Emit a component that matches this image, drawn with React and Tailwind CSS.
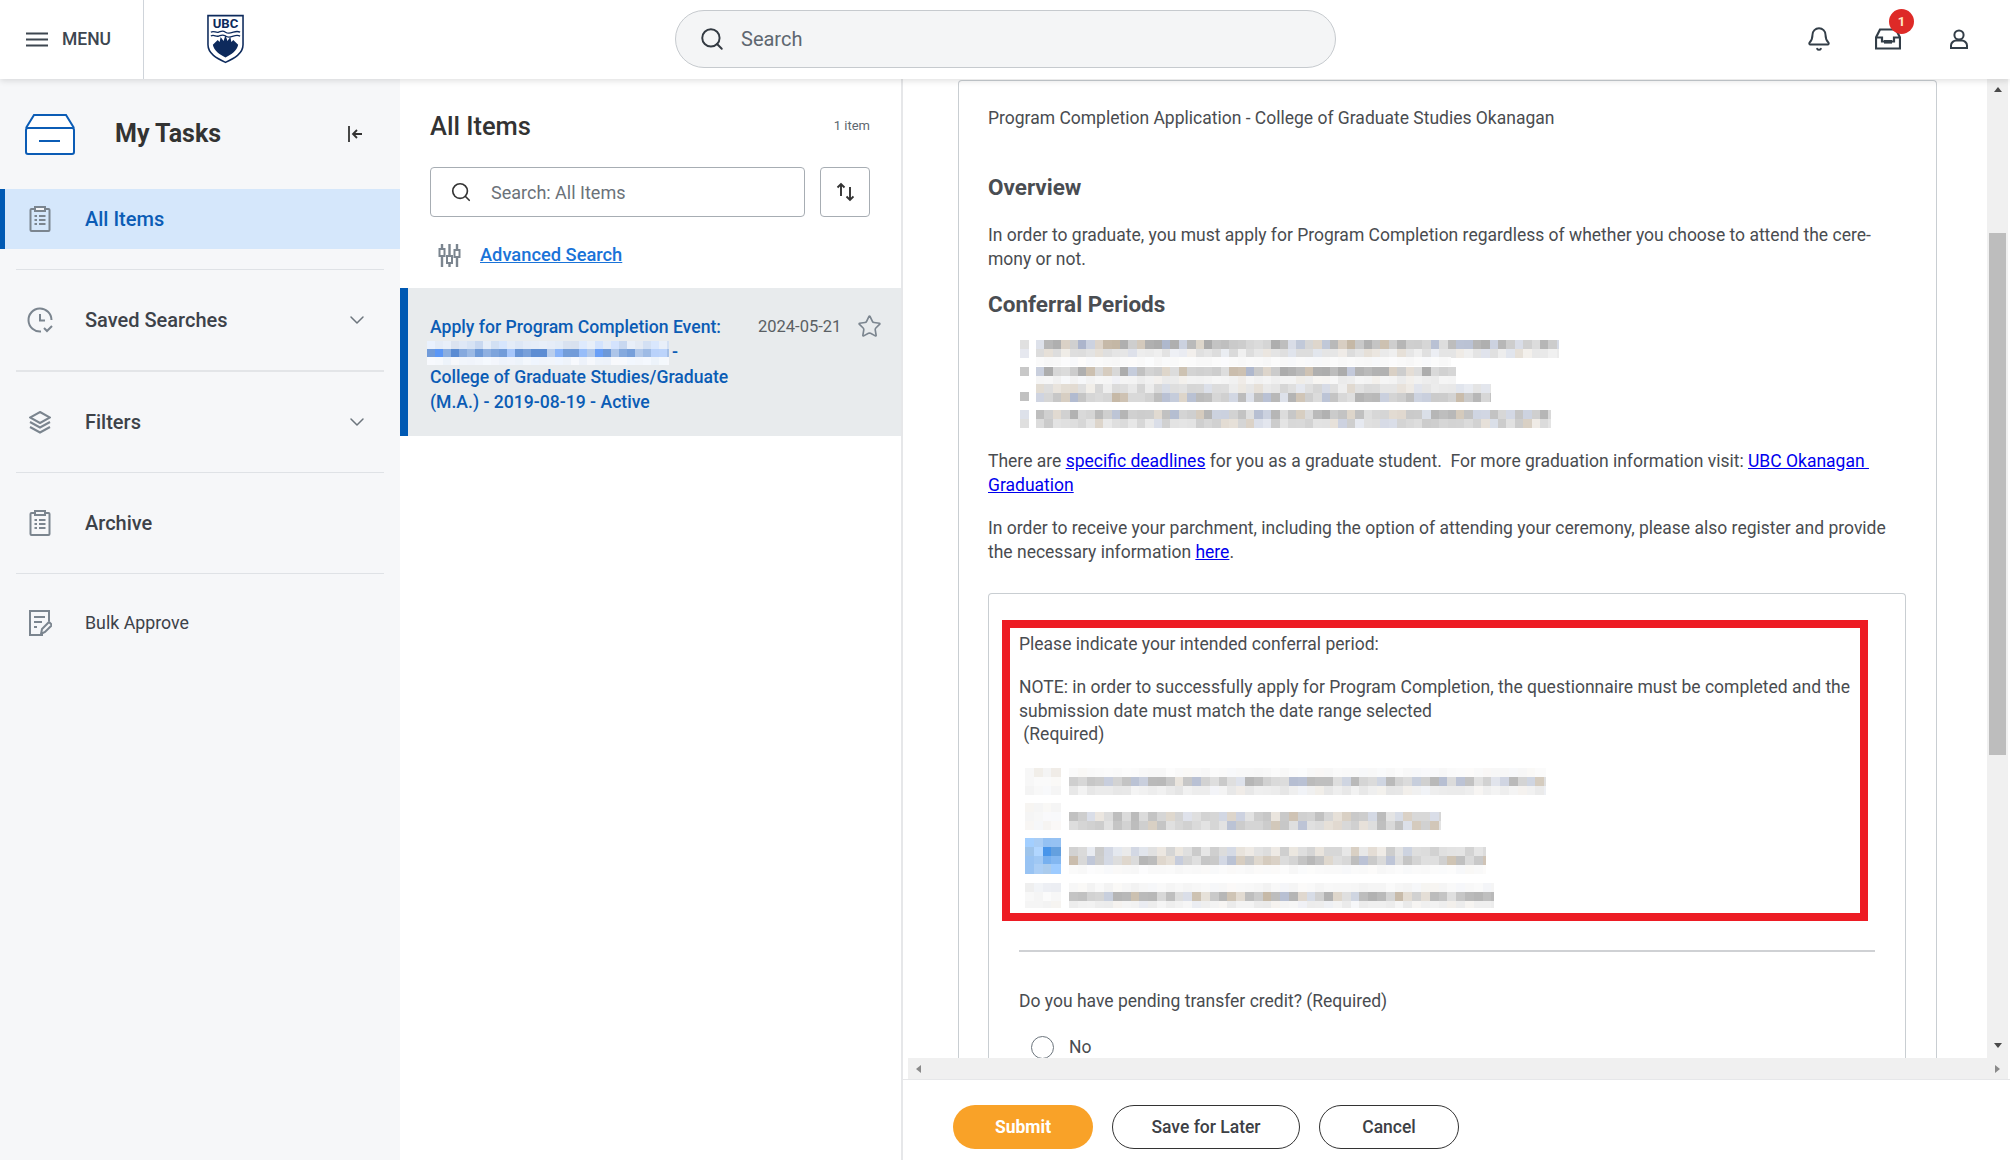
import React from "react";
import { Search, Bell, ChevronDown, Star } from "lucide-react";

function rng(seed) {
  let s = seed;
  return () => {
    s = (s * 16807) % 2147483647;
    return (s - 1) / 2147483646;
  };
}

function Mosaic({ w, h, cw, ch, seed, bands, className }) {
  const r = rng(seed);
  const rects = [];
  bands.forEach((b, bi) => {
    for (let row = 0; row < b.rows.length; row++) {
      const strength = b.rows[row];
      for (let x = b.x0; x < b.x1; x += cw) {
        const v = r();
        const amount = strength * (0.4 + v * 0.6);
        const tint = r();
        const base = b.color || [150, 150, 150];
        const t = tint < 0.16 ? [0, 12, 40] : tint < 0.3 ? [28, 10, -14] : [0, 0, 0];
        const c = base.map((n, i) => Math.min(255, Math.round(255 - (255 - (n + t[i])) * amount)));
        rects.push(
          <rect key={bi + "-" + row + "-" + x} x={x} y={b.y + row * ch} width={Math.min(cw, b.x1 - x) + 0.5} height={ch + 0.5} fill={`rgb(${c[0]},${c[1]},${c[2]})`} />
        );
      }
    }
  });
  return (
    <svg width={w} height={h} viewBox={`0 0 ${w} ${h}`} shapeRendering="crispEdges" className={className}>
      {rects}
    </svg>
  );
}

const Clipboard = () => (
  <svg width="22" height="26" viewBox="0 0 22 26" fill="none" stroke="#7b858f" strokeWidth="2">
    <rect x="1.500" y="3" width="19" height="22" rx="1" />
    <rect x="6" y="1" width="10" height="4" fill="#f6f7f9" />
    <path d="M5.500 10h2.500M10 10h6.500M5.500 14h2.500M10 14h6.500M5.500 18h2.500M10 18h6.500" strokeWidth="2" />
  </svg>
);

const Logo = () => (
  <svg width="37" height="50" viewBox="0 0 38 50">
    <path d="M1 1h36v30c0 9-9 14-18 18C10 45 1 40 1 31z" fill="#fff" stroke="#0d2a5c" strokeWidth="1.600" />
    <text x="19" y="14" textAnchor="middle" fontFamily="Roboto, sans-serif" fontWeight="700" fontSize="13.500" fill="#0d2a5c">UBC</text>
    <path d="M4 18c3-2 5 1 8 0s4-2 7 0 5 1 8 0 5-1 7 0M4 22c3-2 5 1 8 0s4-2 7 0 5 1 8 0 5-1 7 0" fill="none" stroke="#0d2a5c" strokeWidth="1.300" />
    <path d="M6 31l5-5 2 2 1-5 3 4 2-6 2 6 3-4 1 5 2-2 5 5c-1 6-7 10-13 13-6-3-12-7-13-13z" fill="#0d2a5c" />
  </svg>
);

function NavRow({ icon, label, chevron, active, size = "text-[20px]", weight = "font-medium" }) {
  return (
    <div className={`flex items-center h-[60px] ${active ? "bg-[#d5e7fb] border-l-[5px] border-[#0059b3] pl-[24px]" : "pl-[29px]"}`}>
      <span className="w-[56px] flex">{icon}</span>
      <span className={`${size} ${weight} ${active ? "text-[#0b5cb5]" : "text-[#3d4249]"}`}>{label}</span>
      {chevron && <ChevronDown className="ml-auto mr-[31px] text-[#6c757d]" size={24} strokeWidth={1.5} />}
    </div>
  );
}

const Divider = () => <div className="h-px bg-[#dfe2e6] mx-[16px] my-[20px]" />;

const linkCls = "text-[#0000ee] underline";

export default function App() {
  return (
    <div className="w-[2010px] h-[1160px] overflow-hidden flex flex-col bg-white text-[#494c50] font-['Roboto',sans-serif]">
      <header className="h-[79px] shrink-0 flex items-center bg-white shadow-[0_2px_6px_rgba(0,0,0,0.12)] relative z-10">
        <div className="w-[144px] h-full flex items-center pl-[26px] border-r border-[#cfd4da]">
          <svg width="22" height="15" viewBox="0 0 22 15" stroke="#3d4650" strokeWidth="2.200"><path d="M0 1.500h22M0 7.500h22M0 13.500h22" /></svg>
          <span className="ml-[14px] text-[17.500px] font-medium text-[#3d4650]">MENU</span>
        </div>
        <div className="ml-[63px] flex -mt-[2px]"><Logo /></div>
        <div className="ml-[431px] -mt-[2px] w-[661px] h-[58px] rounded-full bg-[#f4f5f6] border border-[#c6cace] flex items-center pl-[23px]">
          <Search size={26} strokeWidth={1.800} className="text-[#333a42]" />
          <span className="ml-[16px] text-[20px] text-[#5e6770]">Search</span>
        </div>
        <div className="ml-[470px] flex items-center -mt-[1px]">
          <Bell size={26} strokeWidth={1.800} className="text-[#333e48]" />
          <div className="relative ml-[43px] flex">
            <svg width="26" height="22" viewBox="0 0 26 22" fill="none" stroke="#333e48" strokeWidth="2.200">
              <path d="M5 1.500h16l4 8V20.500H1V9.500z" />
              <path d="M1 9.500h6v4h12v-4h6M9 13h8" />
              <path d="M9 14.500h8" />
            </svg>
            <span className="absolute -top-[19px] left-[14px] w-[25px] h-[25px] rounded-full bg-[#de2a27] text-[#ffe9c8] text-[13px] font-bold flex items-center justify-center">1</span>
          </div>
          <svg className="ml-[49px]" width="18" height="20" viewBox="0 0 18 20" fill="none" stroke="#333e48" strokeWidth="2">
            <circle cx="9" cy="6" r="4.600" />
            <path d="M1 19v-2.500c0-3 3-5 5-5h6c2 0 5 2 5 5V19z" />
          </svg>
        </div>
      </header>

      <div className="flex-1 flex min-h-0">
        <aside className="w-[400px] shrink-0 bg-[#f6f7f9]">
          <div className="h-[110px] flex items-center pl-[25px] pr-[37px]">
            <svg width="50" height="41" viewBox="0 0 50 41" fill="none" stroke="#0b5cb5" strokeWidth="2">
              <path d="M1 14 9 1h32l8 13" fill="#fff" />
              <rect x="1" y="14" width="48" height="26" rx="2" fill="#fff" />
              <path d="M14 27h21" />
            </svg>
            <span className="ml-[40px] text-[25px] font-bold text-[#333]">My Tasks</span>
            <svg className="ml-auto" width="15" height="16" viewBox="0 0 15 16" fill="none" stroke="#333" strokeWidth="1.800"><path d="M1 0v16M14 8H5M9 4 5 8l4 4" /></svg>
          </div>
          <NavRow active icon={<Clipboard />} label="All Items" />
          <Divider />
          <NavRow icon={
            <svg className="-ml-[2px]" width="26" height="26" viewBox="0 0 26 26" fill="none" stroke="#7b858f" strokeWidth="2">
              <path d="M14 24.500A11.500 11.500 0 1 1 24.500 13" />
              <path d="M13 7v6.500h5" /><path d="m17 21 3 3 5-5" />
            </svg>
          } label="Saved Searches" chevron />
          <div className="h-[2px] bg-[#e3e5e8] mx-[16px] mt-[20px] mb-[20px]" />
          <NavRow icon={
            <svg width="22" height="23" viewBox="0 0 22 23" fill="none" stroke="#7b858f" strokeWidth="2">
              <path d="M11 1 21 6.500 11 12 1 6.500z" /><path d="m1 11 10 5.500L21 11M1 16l10 5.500L21 16" />
            </svg>
          } label="Filters" chevron />
          <Divider />
          <NavRow icon={<Clipboard />} label="Archive" />
          <div className="h-px bg-[#dfe2e6] mx-[16px] mt-[20px] mb-[19px]" />
          <NavRow size="text-[17.800px]" weight="font-normal" icon={
            <svg width="23" height="26" viewBox="0 0 23 26" fill="none" stroke="#7b858f" strokeWidth="2">
              <path d="M14 25H1V1h19v10" /><path d="M5 7h11M5 12h8M5 17h3" />
              <path d="M12 24l1-5 7-7 3 3-7 7z" />
            </svg>
          } label="Bulk Approve" />
        </aside>

        <section className="w-[503px] shrink-0 border-r-[2px] border-[#e6e7e9] flex flex-col">
          <div className="flex items-center justify-between pl-[30px] pr-[31px] mt-[29px] h-[36px]">
            <span className="text-[25.500px] font-medium text-[#333]">All Items</span>
            <span className="text-[13px] text-[#5e6770]">1 item</span>
          </div>
          <div className="flex gap-[15px] pl-[30px] mt-[23px]">
            <div className="w-[375px] h-[50px] rounded border border-[#a7adb3] flex items-center pl-[19px]">
              <Search size={22} strokeWidth={1.800} className="text-[#333]" />
              <span className="ml-[19px] text-[18px] text-[#6b7279]">Search: All Items</span>
            </div>
            <div className="w-[50px] h-[50px] rounded border border-[#a7adb3] flex items-center justify-center">
              <svg width="18" height="20" viewBox="0 0 18 20" fill="none" stroke="#333" strokeWidth="1.900">
                <path d="M5 14V2M1.500 5.500 5 2l3.500 3.500M14 5v13M10.500 14.500 14 18l3.500-3.500" />
              </svg>
            </div>
          </div>
          <div className="flex items-center pl-[38px] mt-[26px] h-[24px]">
            <svg width="23" height="23" viewBox="0 0 23 23" fill="none" stroke="#7b858f" strokeWidth="2.400">
              <path d="M4 0v5M4 12v11M11.500 0v12M11.500 19v4M19 0v6M19 13v10" />
              <rect x="1.500" y="5" width="5" height="7" strokeWidth="2" />
              <rect x="9" y="12" width="5" height="7" strokeWidth="2" />
              <rect x="16.500" y="6" width="5" height="7" strokeWidth="2" />
            </svg>
            <span className="ml-[19px] text-[18.300px] font-medium text-[#1a73d8] underline">Advanced Search</span>
          </div>
          <div className="mt-[21px] h-[148px] bg-[#e8ebed] border-l-[8px] border-[#0059b3] flex pl-[22px] pt-[27px] relative">
            <div className="w-[310px] text-[#0b5cb5] text-[17.600px] font-medium leading-[25px]">
              <div className="whitespace-nowrap">Apply for Program Completion Event:</div>
              <div className="h-[25px] flex items-center -ml-[3px]">
                <Mosaic w={242} h={24} cw={8} ch={8} seed={77} bands={[
                  { x0: 0, x1: 242, y: 0, rows: [0.3, 0.9, 0.1], color: [70, 125, 205] },
                ]} />
                <span className="ml-[3px]">-</span>
              </div>
              <div className="whitespace-nowrap">College of Graduate Studies/Graduate</div>
              <div className="whitespace-nowrap">(M.A.) - 2019-08-19 - Active</div>
            </div>
            <span className="absolute left-[350px] top-[26px] text-[16.500px] leading-[25px] text-[#5a5f64]">2024-05-21</span>
            <Star className="absolute left-[449px] top-[26px] text-[#7b858f]" size={25} strokeWidth={1.600} />
          </div>
        </section>

        <main className="flex-1 flex flex-col min-w-0">
          <div className="flex h-[979px] min-h-0">
            <div className="flex-1 overflow-hidden pl-[55px]">
              <div className="w-[979px] border border-b-0 border-[#c9ced2] rounded-t pl-[29px] pr-[27px] pt-[25px] text-[17.500px] leading-[24px] mt-[1px]">
                <p>Program Completion Application - College of Graduate Studies Okanagan</p>
                <h2 className="mt-[43px] text-[22.500px] leading-[28px] font-bold text-[#4a4d52]">Overview</h2>
                <p className="mt-[22px]">In order to graduate, you must apply for Program Completion regardless of whether you choose to attend the cere-<br />mony or not.</p>
                <h2 className="mt-[19px] text-[22.500px] leading-[28px] font-bold text-[#4a4d52]">Conferral Periods</h2>
                <Mosaic className="mt-[22px] ml-[32px] block" w={540} h={88} cw={8.400} ch={8.500} seed={12345} bands={[
                  { x0: 0, x1: 8, y: 0, rows: [0.65, 0.25] },
                  { x0: 16, x1: 538, y: 0, rows: [0.8, 0.35] },
                  { x0: 16, x1: 430, y: 17, rows: [0.08] },
                  { x0: 0, x1: 8, y: 27, rows: [0.85] },
                  { x0: 16, x1: 435, y: 27, rows: [0.8, 0.2] },
                  { x0: 16, x1: 470, y: 44, rows: [0.4, 0.75] },
                  { x0: 0, x1: 8, y: 52, rows: [0.85] },
                  { x0: 0, x1: 8, y: 70, rows: [0.5, 0.4] },
                  { x0: 16, x1: 530, y: 70, rows: [0.75, 0.5] },
                ]} />
                <p className="mt-[21px]">There are <span className={linkCls}>specific deadlines</span> for you as a graduate student.&nbsp; For more graduation information visit: <span className={linkCls}>UBC Okanagan&nbsp;</span><br /><span className={linkCls}>Graduation</span></p>
                <p className="mt-[19px]">In order to receive your parchment, including the option of attending your ceremony, please also register and provide<br />the necessary information <span className={linkCls}>here</span>.</p>

                <div className="mt-[29px] w-[918px] border border-b-0 border-[#c9ced2] rounded-t pl-[13px] pt-[26px] h-[600px]">
                  <div className="w-[866px] h-[301px] border-[8px] border-[#ed1c24] pl-[9px] pt-[4px]">
                    <p>Please indicate your intended conferral period:</p>
                    <p className="mt-[20px] leading-[23.500px]">NOTE: in order to successfully apply for Program Completion, the questionnaire must be completed and the<br />submission date must match the date range selected<br />&nbsp;(Required)</p>
                    <Mosaic className="mt-[21px] ml-[6px] block" w={525} h={140} cw={8.800} ch={8.800} seed={999} bands={[
                      { x0: 0, x1: 35, y: 0, rows: [0.2, 0.1, 0.15] },
                      { x0: 44, x1: 520, y: 0, rows: [0.08, 0.7, 0.25] },
                      { x0: 0, x1: 35, y: 35, rows: [0.15, 0.1, 0.15] },
                      { x0: 44, x1: 415, y: 44, rows: [0.65, 0.65] },
                      { x0: 0, x1: 35, y: 70, rows: [0.5, 0.9, 0.9, 0.5], color: [40, 130, 230] },
                      { x0: 44, x1: 460, y: 79, rows: [0.5, 0.7, 0.08] },
                      { x0: 0, x1: 35, y: 115, rows: [0.2, 0.1, 0.15] },
                      { x0: 44, x1: 468, y: 115, rows: [0.12, 0.75, 0.2] },
                    ]} />
                  </div>
                  <div className="ml-[17px] w-[856px] h-[2px] bg-[#cfd1d4] mt-[29px]" />
                  <p className="ml-[17px] mt-[37px]">Do you have pending transfer credit? (Required)</p>
                  <div className="ml-[29px] mt-[22px] flex items-center">
                    <span className="w-[23px] h-[23px] rounded-full border border-[#6c757d] bg-white" />
                    <span className="ml-[15px]">No</span>
                  </div>
                </div>
              </div>
            </div>
            <div className="w-[21px] shrink-0 bg-[#f0f0f0] flex flex-col items-center relative mr-[2px]">
              <div className="mt-[8px] w-0 h-0 border-x-[4.500px] border-x-transparent border-b-[5px] border-b-[#4a4a4a]" />
              <div className="mt-[141px] w-[17px] h-[522px] bg-[#bdbdbd]" />
              <div className="mt-auto mb-[10px] w-0 h-0 border-x-[4.500px] border-x-transparent border-t-[5px] border-t-[#4a4a4a]" />
            </div>
          </div>
          <div className="h-[21px] ml-[5px] mr-[2px] bg-[#f0f0f0] flex items-center justify-between px-[8px] shrink-0">
            <div className="w-0 h-0 border-y-[4.500px] border-y-transparent border-r-[5px] border-r-[#8a8a8a]" />
            <div className="w-0 h-0 border-y-[4.500px] border-y-transparent border-l-[5px] border-l-[#8a8a8a]" />
          </div>
          <div className="flex-1 border-t border-[#e6e7e9] flex items-center pl-[50px] pt-[14px] gap-[19px]">
            <button className="w-[140px] h-[44px] rounded-full bg-[#f9a228] text-white text-[17.500px] font-bold">Submit</button>
            <button className="w-[188px] h-[44px] rounded-full border border-[#333] text-[17.500px] font-medium text-[#3d4045]">Save for Later</button>
            <button className="w-[140px] h-[44px] rounded-full border border-[#333] text-[17.500px] font-medium text-[#3d4045]">Cancel</button>
          </div>
        </main>
      </div>
    </div>
  );
}
